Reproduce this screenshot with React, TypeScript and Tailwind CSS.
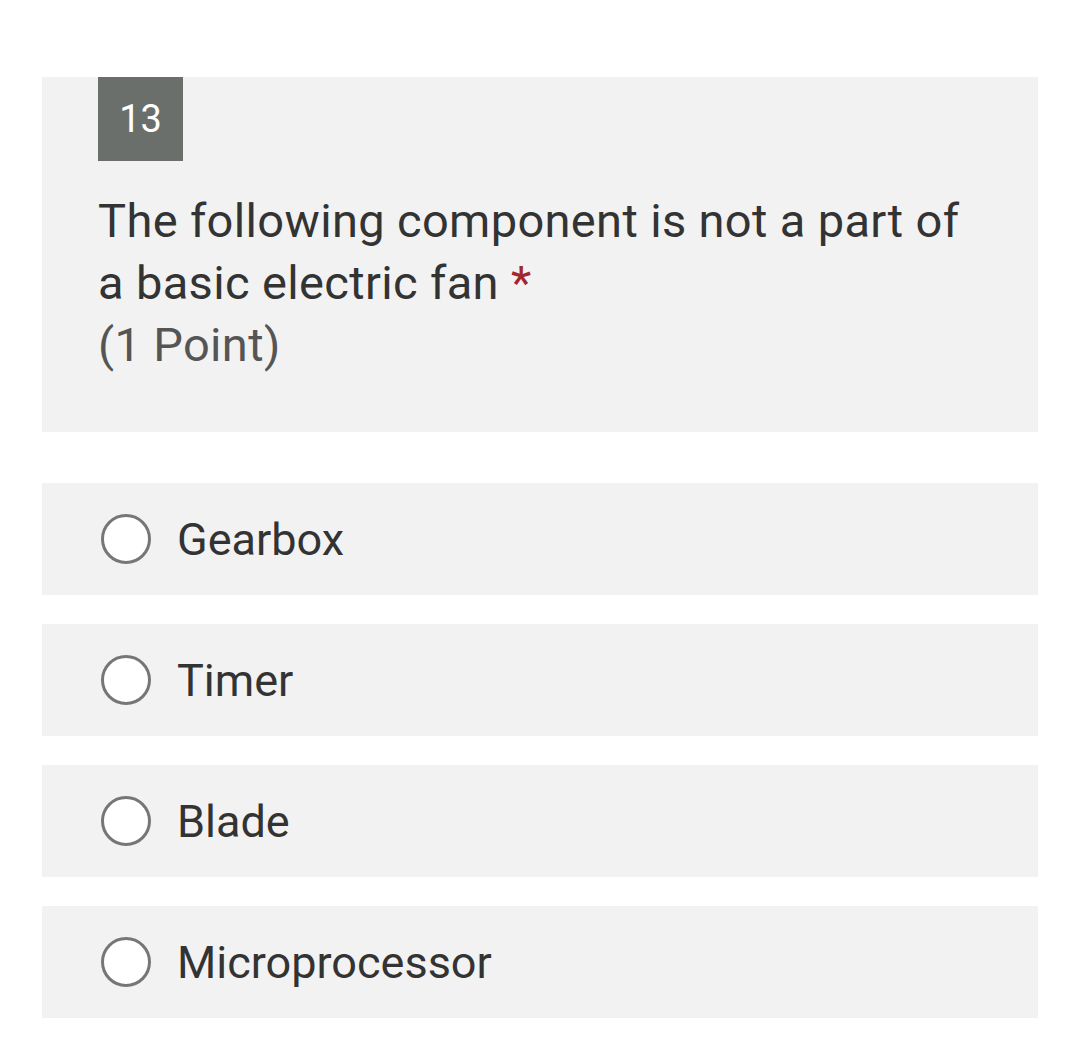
import React from 'react';

const options = ['Gearbox', 'Timer', 'Blade', 'Microprocessor'];

function RadioOption({ label }: { label: string }) {
  return (
    <label className="flex h-[112px] items-center bg-[#f2f2f2] pl-[59px]">
      <span className="h-[50px] w-[50px] shrink-0 rounded-full border-[3px] border-[#767676] bg-white" />
      <span className="ml-[26px] text-[45px] leading-none text-[#333333]">{label}</span>
    </label>
  );
}

export default function App() {
  return (
    <div
      className="min-h-[1042px] bg-white px-[42px] pt-[77px]"
      style={{ fontFamily: 'Roboto, "Noto Sans", sans-serif' }}
    >
      <div className="h-[355px] bg-[#f2f2f2] pl-[56px] pr-[60px]">
        <div className="flex h-[84px] w-[85px] items-center justify-center bg-[#6b6f6b] text-[38px] text-white">
          13
        </div>
        <div className="mt-[29px] text-[47px] leading-[62px] tracking-[0.35px] text-[#333333]">
          <div>
            The following component is not a part of a basic electric fan{' '}
            <span className="text-[#a4262c]">*</span>
          </div>
          <div className="text-[#555555]">(1 Point)</div>
        </div>
      </div>

      <div className="mt-[51px] flex flex-col gap-[29px]">
        {options.map((o) => (
          <RadioOption key={o} label={o} />
        ))}
      </div>
    </div>
  );
}
